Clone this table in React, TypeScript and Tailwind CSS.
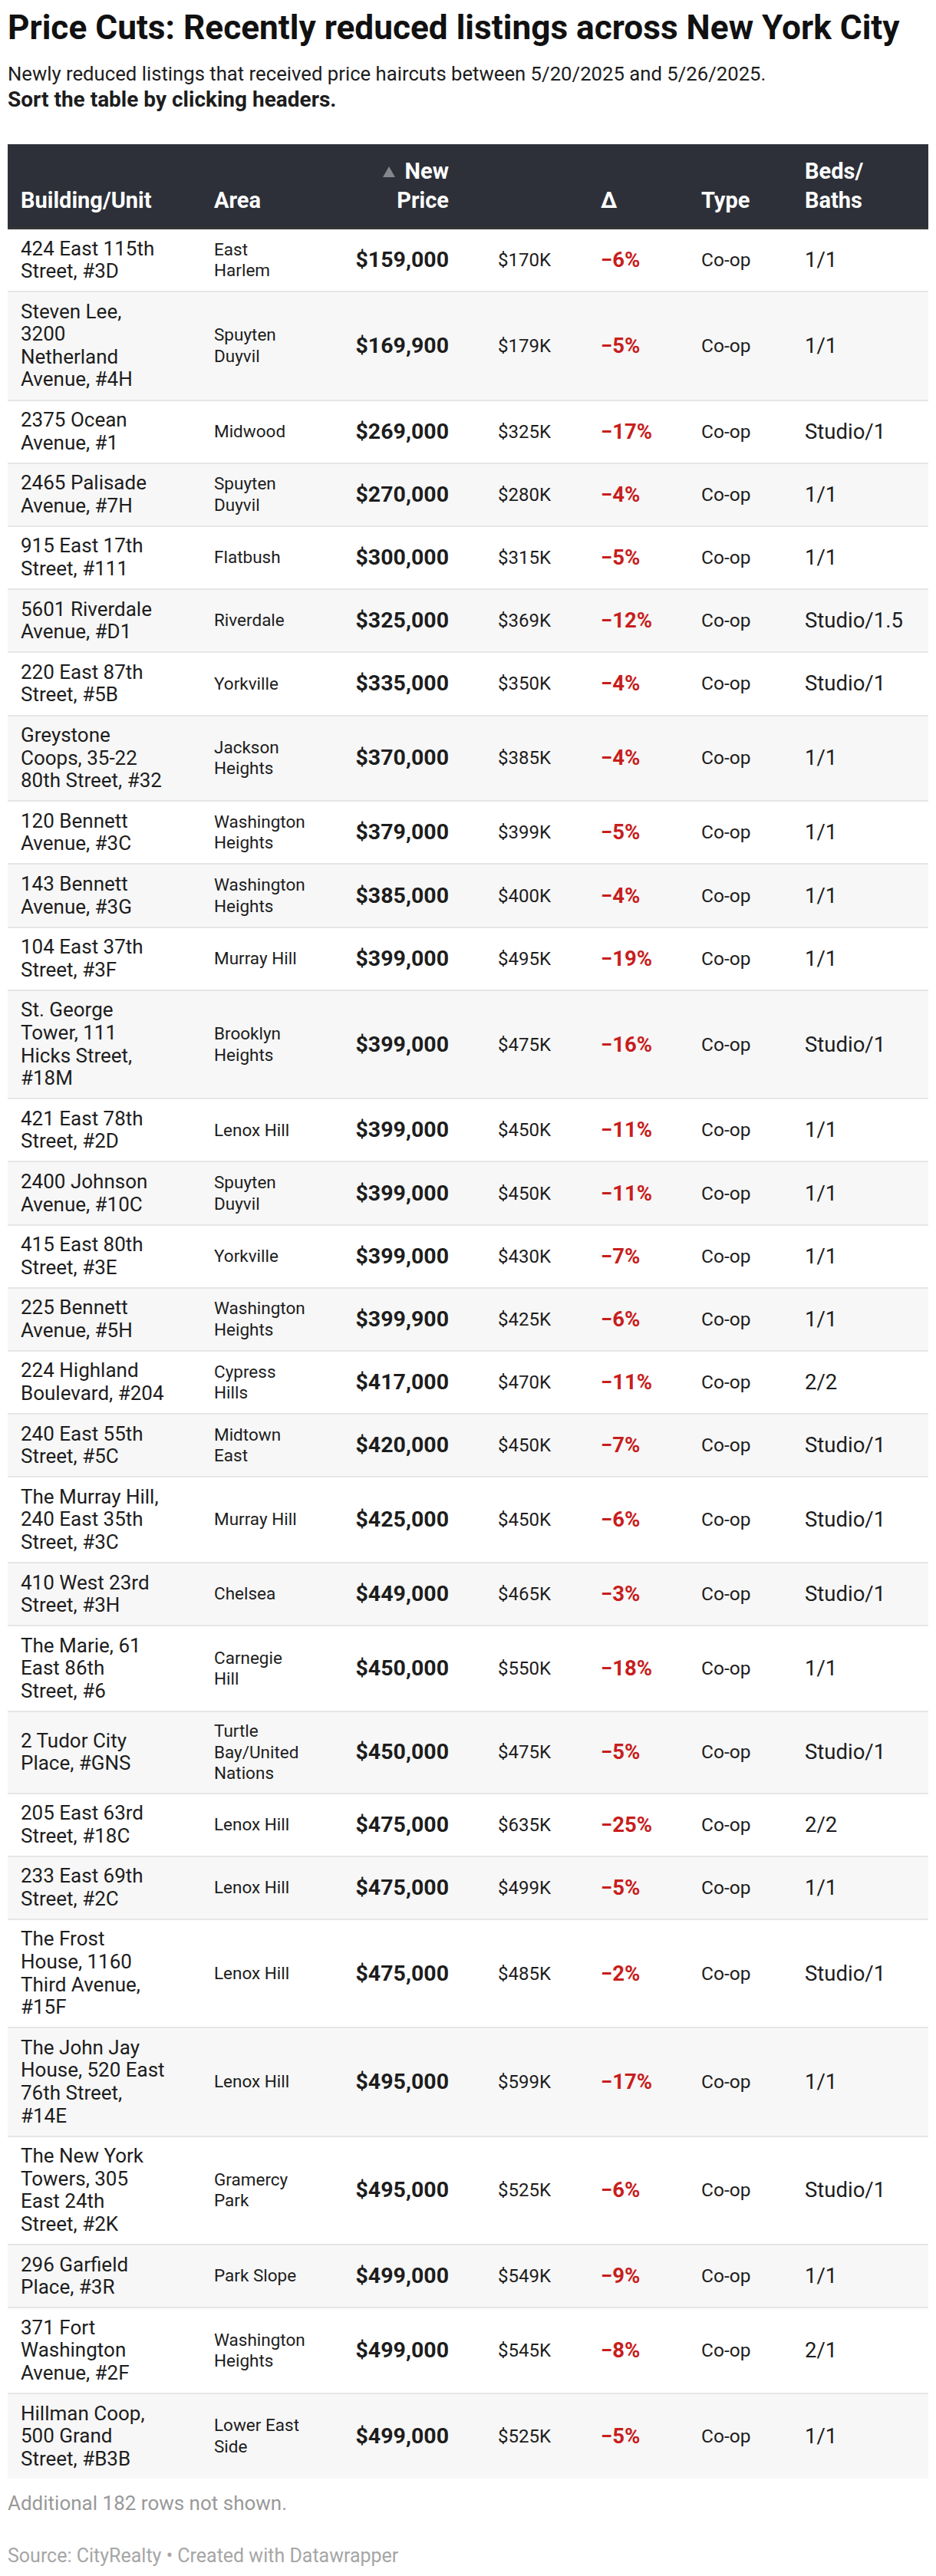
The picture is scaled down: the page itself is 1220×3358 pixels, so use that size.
import React from "react";

type Row = {
  b: string[];
  a: string[];
  p: string;
  o: string;
  d: string;
  t: string;
  bb: string;
};

const rows: Row[] = [
  { b: ["424 East 115th", "Street, #3D"], a: ["East", "Harlem"], p: "$159,000", o: "$170K", d: "\u22126%", t: "Co-op", bb: "1/1" },
  { b: ["Steven Lee,", "3200", "Netherland", "Avenue, #4H"], a: ["Spuyten", "Duyvil"], p: "$169,900", o: "$179K", d: "\u22125%", t: "Co-op", bb: "1/1" },
  { b: ["2375 Ocean", "Avenue, #1"], a: ["Midwood"], p: "$269,000", o: "$325K", d: "\u221217%", t: "Co-op", bb: "Studio/1" },
  { b: ["2465 Palisade", "Avenue, #7H"], a: ["Spuyten", "Duyvil"], p: "$270,000", o: "$280K", d: "\u22124%", t: "Co-op", bb: "1/1" },
  { b: ["915 East 17th", "Street, #111"], a: ["Flatbush"], p: "$300,000", o: "$315K", d: "\u22125%", t: "Co-op", bb: "1/1" },
  { b: ["5601 Riverdale", "Avenue, #D1"], a: ["Riverdale"], p: "$325,000", o: "$369K", d: "\u221212%", t: "Co-op", bb: "Studio/1.5" },
  { b: ["220 East 87th", "Street, #5B"], a: ["Yorkville"], p: "$335,000", o: "$350K", d: "\u22124%", t: "Co-op", bb: "Studio/1" },
  { b: ["Greystone", "Coops, 35-22", "80th Street, #32"], a: ["Jackson", "Heights"], p: "$370,000", o: "$385K", d: "\u22124%", t: "Co-op", bb: "1/1" },
  { b: ["120 Bennett", "Avenue, #3C"], a: ["Washington", "Heights"], p: "$379,000", o: "$399K", d: "\u22125%", t: "Co-op", bb: "1/1" },
  { b: ["143 Bennett", "Avenue, #3G"], a: ["Washington", "Heights"], p: "$385,000", o: "$400K", d: "\u22124%", t: "Co-op", bb: "1/1" },
  { b: ["104 East 37th", "Street, #3F"], a: ["Murray Hill"], p: "$399,000", o: "$495K", d: "\u221219%", t: "Co-op", bb: "1/1" },
  { b: ["St. George", "Tower, 111", "Hicks Street,", "#18M"], a: ["Brooklyn", "Heights"], p: "$399,000", o: "$475K", d: "\u221216%", t: "Co-op", bb: "Studio/1" },
  { b: ["421 East 78th", "Street, #2D"], a: ["Lenox Hill"], p: "$399,000", o: "$450K", d: "\u221211%", t: "Co-op", bb: "1/1" },
  { b: ["2400 Johnson", "Avenue, #10C"], a: ["Spuyten", "Duyvil"], p: "$399,000", o: "$450K", d: "\u221211%", t: "Co-op", bb: "1/1" },
  { b: ["415 East 80th", "Street, #3E"], a: ["Yorkville"], p: "$399,000", o: "$430K", d: "\u22127%", t: "Co-op", bb: "1/1" },
  { b: ["225 Bennett", "Avenue, #5H"], a: ["Washington", "Heights"], p: "$399,900", o: "$425K", d: "\u22126%", t: "Co-op", bb: "1/1" },
  { b: ["224 Highland", "Boulevard, #204"], a: ["Cypress", "Hills"], p: "$417,000", o: "$470K", d: "\u221211%", t: "Co-op", bb: "2/2" },
  { b: ["240 East 55th", "Street, #5C"], a: ["Midtown", "East"], p: "$420,000", o: "$450K", d: "\u22127%", t: "Co-op", bb: "Studio/1" },
  { b: ["The Murray Hill,", "240 East 35th", "Street, #3C"], a: ["Murray Hill"], p: "$425,000", o: "$450K", d: "\u22126%", t: "Co-op", bb: "Studio/1" },
  { b: ["410 West 23rd", "Street, #3H"], a: ["Chelsea"], p: "$449,000", o: "$465K", d: "\u22123%", t: "Co-op", bb: "Studio/1" },
  { b: ["The Marie, 61", "East 86th", "Street, #6"], a: ["Carnegie", "Hill"], p: "$450,000", o: "$550K", d: "\u221218%", t: "Co-op", bb: "1/1" },
  { b: ["2 Tudor City", "Place, #GNS"], a: ["Turtle", "Bay/United", "Nations"], p: "$450,000", o: "$475K", d: "\u22125%", t: "Co-op", bb: "Studio/1" },
  { b: ["205 East 63rd", "Street, #18C"], a: ["Lenox Hill"], p: "$475,000", o: "$635K", d: "\u221225%", t: "Co-op", bb: "2/2" },
  { b: ["233 East 69th", "Street, #2C"], a: ["Lenox Hill"], p: "$475,000", o: "$499K", d: "\u22125%", t: "Co-op", bb: "1/1" },
  { b: ["The Frost", "House, 1160", "Third Avenue,", "#15F"], a: ["Lenox Hill"], p: "$475,000", o: "$485K", d: "\u22122%", t: "Co-op", bb: "Studio/1" },
  { b: ["The John Jay", "House, 520 East", "76th Street,", "#14E"], a: ["Lenox Hill"], p: "$495,000", o: "$599K", d: "\u221217%", t: "Co-op", bb: "1/1" },
  { b: ["The New York", "Towers, 305", "East 24th", "Street, #2K"], a: ["Gramercy", "Park"], p: "$495,000", o: "$525K", d: "\u22126%", t: "Co-op", bb: "Studio/1" },
  { b: ["296 Garfield", "Place, #3R"], a: ["Park Slope"], p: "$499,000", o: "$549K", d: "\u22129%", t: "Co-op", bb: "1/1" },
  { b: ["371 Fort", "Washington", "Avenue, #2F"], a: ["Washington", "Heights"], p: "$499,000", o: "$545K", d: "\u22128%", t: "Co-op", bb: "2/1" },
  { b: ["Hillman Coop,", "500 Grand", "Street, #B3B"], a: ["Lower East", "Side"], p: "$499,000", o: "$525K", d: "\u22125%", t: "Co-op", bb: "1/1" },
];

const GRID = "grid grid-cols-[252px_158px_180px_166px_131px_135px_178px]";

function Lines({ lines }: { lines: string[] }) {
  return (
    <>
      {lines.map((l, i) => (
        <div key={i} className="whitespace-nowrap">
          {l}
        </div>
      ))}
    </>
  );
}

export default function App() {
  return (
    <div
      className="bg-white px-[10px] pt-[10px] text-[#1d1d1d]"
      style={{ fontFamily: "Roboto, 'Liberation Sans', sans-serif" }}
    >
      <h1 className="text-[44.2px] font-bold leading-[52px] text-[#111]">
        Price Cuts: Recently reduced listings across New York City
      </h1>
      <div className="mt-[18px] leading-[33px] text-[#1d1d1d]">
        <p className="text-[25.7px]">
          Newly reduced listings that received price haircuts between 5/20/2025 and 5/26/2025.
        </p>
        <p className="text-[28px] font-bold">Sort the table by clicking headers.</p>
      </div>

      <div className="mt-[42px] w-[1200px]">
        {/* header */}
        <div
          className={`${GRID} items-end bg-[#2d3039] border-b-[3px] border-[#353535] py-4 text-[29px] font-bold leading-[38px] text-white`}
        >
          <div className="pl-[17px] whitespace-nowrap">Building/Unit</div>
          <div className="pl-[17px]">Area</div>
          <div className="pr-[15px] text-right">
            <div className="flex items-center justify-end">
              <svg width="16" height="14" viewBox="0 0 16 14" className="mr-[13px] mt-[2px]">
                <polygon points="8,0 16,14 0,14" fill="#85878e" />
              </svg>
              <span>New</span>
            </div>
            <div>Price</div>
          </div>
          <div className="pl-[49px]"></div>
          <div className="pl-[17px]">Δ</div>
          <div className="pl-[17px]">Type</div>
          <div className="pl-[17px]">
            <div>Beds/</div>
            <div>Baths</div>
          </div>
        </div>

        {/* body */}
        {rows.map((r, i) => (
          <div
            key={i}
            className={`${GRID} items-center ${i % 2 === 1 ? "bg-[#f7f7f7]" : "bg-white"} ${
              i > 0 ? "border-t-2 border-[#e6e6e6]" : ""
            }`}
          >
            <div className="pl-[17px] py-[10.5px] text-[26px] leading-[29.6px]">
              <Lines lines={r.b} />
            </div>
            <div className="pl-[17px] py-[11px] text-[22.5px] leading-[27.5px]">
              <Lines lines={r.a} />
            </div>
            <div className="pr-[15px] text-right text-[28.5px] font-bold leading-[30px] whitespace-nowrap">{r.p}</div>
            <div className="pl-[49px] text-[24px] leading-[30px]">{r.o}</div>
            <div className="pl-[17px] text-[27.5px] font-bold leading-[30px] text-[#c71e1d]">{r.d}</div>
            <div className="pl-[17px] text-[24.5px] leading-[30px]">{r.t}</div>
            <div className="pl-[17px] text-[27.5px] leading-[30px] whitespace-nowrap">{r.bb}</div>
          </div>
        ))}
      </div>

      <div className="mt-[17px] text-[26px] leading-[30px] text-[#999999]">Additional 182 rows not shown.</div>
      <div className="mt-[39px] pb-[10px] text-[25px] leading-[30px] text-[#a6a6a6]">
        Source: CityRealty • Created with Datawrapper
      </div>
    </div>
  );
}
